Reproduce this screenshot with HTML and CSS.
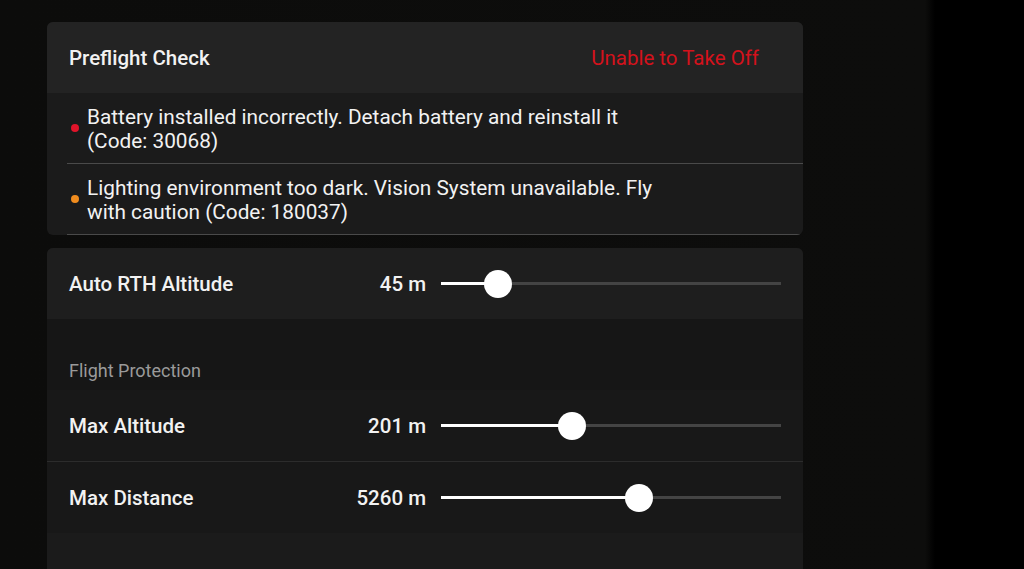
FILE: index.html
```html
<!DOCTYPE html>
<html lang="en">
<head>
  <meta charset="UTF-8"/>
  <title>Preflight Check</title>
  <link rel="stylesheet" href="styles.css">
</head>
<body>
  <div class="panel">
    <div class="card check">
      <div class="head">
        <span class="title">Preflight Check</span>
        <span class="status">Unable to Take Off</span>
      </div>
      <div class="msg">
        <span class="dot red"></span>
        <p>Battery installed incorrectly. Detach battery and reinstall it<br>(Code: 30068)</p>
      </div>
      <div class="msg">
        <span class="dot orange"></span>
        <p>Lighting environment too dark. Vision System unavailable. Fly<br>with caution (Code: 180037)</p>
      </div>
    </div>

    <div class="card settings">
      <div class="row first">
        <span class="label">Auto RTH Altitude</span>
        <span class="value">45 m</span>
        <div class="track"><div class="fill" style="width: 16.8%"></div><span class="thumb" style="left: 16.8%"></span></div>
      </div>
      <div class="section">Flight Protection</div>
      <div class="row line">
        <span class="label">Max Altitude</span>
        <span class="value">201 m</span>
        <div class="track"><div class="fill" style="width: 38.5%"></div><span class="thumb" style="left: 38.5%"></span></div>
      </div>
      <div class="row">
        <span class="label">Max Distance</span>
        <span class="value">5260 m</span>
        <div class="track"><div class="fill" style="width: 58.2%"></div><span class="thumb" style="left: 58.2%"></span></div>
      </div>
      <div class="rest"></div>
    </div>
  </div>
</body>
</html>
```

FILE: styles.css
```css
html, body { height: 100%; }
body { margin: 0; font-family: Roboto, "Noto Sans", sans-serif; color: #f2f2f2; background: linear-gradient(to right, #0c0c0b 0, #0d0d0c 925px, #000 935px); overflow: hidden; }
.panel { width: 756px; margin-left: 47px; padding-top: 22px; }
.card { border-radius: 6px; overflow: hidden; }
.check { background-color: #1b1b1b; }
.head { height: 71px; display: flex; align-items: center; justify-content: space-between; padding: 0 44px 0 22px; background-color: #232323; }
.title { font-size: 20.5px; font-weight: 500; }
.status { font-size: 20.5px; color: #d4121c; }
.msg { height: 70px; margin-left: 20px; display: flex; align-items: center; border-bottom: 1px solid #4a4a4a; }
.msg p { margin: 0 0 0 8px; font-size: 20.8px; line-height: 24px; padding-top: 2px; }
.dot { width: 8px; height: 8px; border-radius: 50%; margin-left: 4px; flex-shrink: 0; }
.dot.red { background-color: #e0142a; }
.dot.orange { background-color: #f08c1e; }
.settings { margin-top: 13px; border-radius: 6px 6px 0 0; background-color: #1a1a1a; }
.row { height: 71px; display: flex; align-items: center; padding: 0 22px; background-color: #181818; }
.row.first { background-color: #1e1e1e; }
.row.line { border-bottom: 1px solid #2c2c2c; }
.label { flex: 1; font-size: 20.5px; font-weight: 500; }
.value { font-size: 20.5px; font-weight: 500; margin-right: 15px; }
.track { position: relative; width: 340px; height: 3px; background-color: #444; }
.fill { height: 100%; background-color: #fff; }
.thumb { position: absolute; top: 50%; width: 28px; height: 28px; margin: -14px 0 0 -14px; border-radius: 50%; background-color: #fff; }
.section { height: 71px; display: flex; align-items: flex-end; padding: 0 22px 9px; box-sizing: border-box; font-size: 18px; color: #9a9a9a; background-color: #161616; }
.rest { height: 60px; background-color: #1b1b1b; }
```
